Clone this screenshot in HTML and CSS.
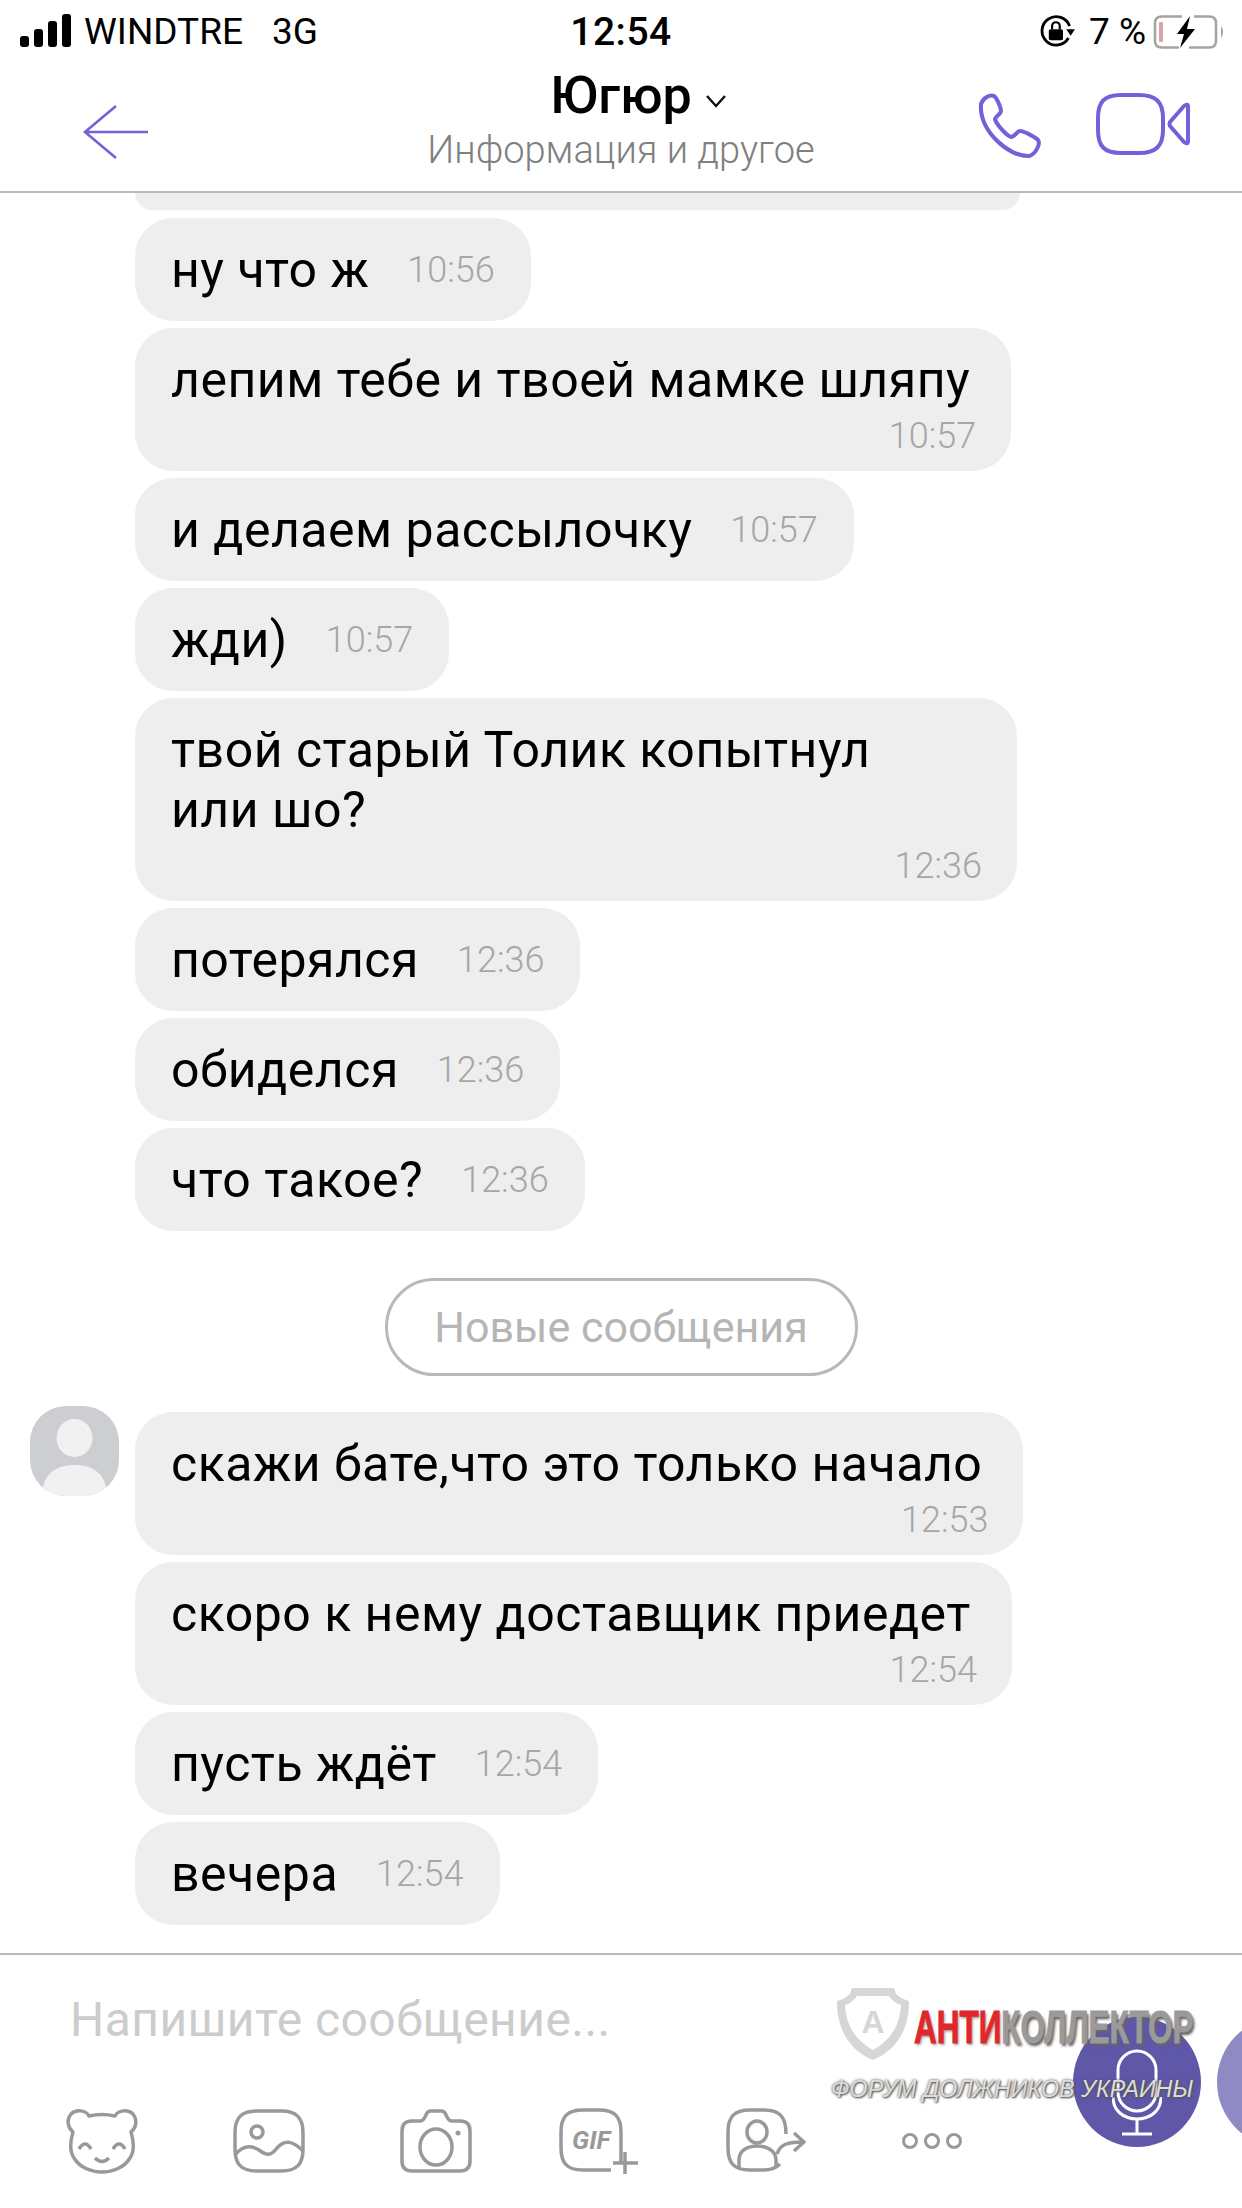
FILE: index.html
```html
<!DOCTYPE html>
<html lang="ru">
<head>
    <meta charset="UTF-8">
    <title>Югюр</title>
    <link rel="stylesheet" href="styles.css">
</head>
<body>
    <div class="screen">
        <div class="status-bar">
            <div class="status-left">
                <svg class="signal" width="51" height="33" viewBox="0 0 51 33">
                    <rect x="0" y="22" width="9" height="11" rx="3"/>
                    <rect x="14" y="15" width="9" height="18" rx="3"/>
                    <rect x="28" y="7" width="9" height="26" rx="3"/>
                    <rect x="42" y="0" width="9" height="33" rx="3"/>
                </svg>
                <span class="carrier">WINDTRE</span>
                <span class="network">3G</span>
            </div>
            <div class="status-time">12:54</div>
            <div class="status-right">
                <svg class="rotation-lock" width="36" height="33" viewBox="0 0 33 30">
                    <path d="M27 21 A13 13 0 1 1 28 10" fill="none" stroke="#000" stroke-width="2.6"/>
                    <path d="M25 13 L33 13 L29 19Z" fill="#000"/>
                    <rect x="9" y="13" width="13" height="10" rx="1.5" fill="#000"/>
                    <path d="M12 13 V10 A3.5 3.5 0 0 1 19 10 V13" fill="none" stroke="#000" stroke-width="2"/>
                </svg>
                <span class="battery-text">7 %</span>
                <svg class="battery" width="74" height="34" viewBox="0 0 74 34">
                    <path d="M29 1.5 H9 Q2 1.5 2 8 V26 Q2 32.500 9 32.500 H26" fill="none" stroke="#a3a3a3" stroke-width="2.500"/>
                    <path d="M41 1.500 H56 Q63 1.500 63 8 V26 Q63 32.500 56 32.500 H36" fill="none" stroke="#a3a3a3" stroke-width="2.500"/>
                    <rect x="6" y="7" width="4" height="20" rx="1" fill="#d9a3a8"/>
                    <path d="M37 1 L24 19 H31 L27 33 L42 14 H34Z" fill="#000"/>
                    <path d="M68 11 Q72 16 68 23Z" fill="#a3a3a3"/>
                </svg>
            </div>
        </div>

        <div class="chat-header">
            <svg class="back-icon" width="66" height="56" viewBox="0 0 66 56">
                <path d="M33 2 L2 28 L33 54 M2 28 H65" fill="none" stroke="#7360db" stroke-width="2.600"/>
            </svg>
            <div class="chat-title">
                <div class="chat-name">Югюр
                    <svg class="chevron" width="22" height="14" viewBox="0 0 22 14">
                        <path d="M2 2 L11 12 L20 2" fill="none" stroke="#111" stroke-width="2.400"/>
                    </svg>
                </div>
                <div class="chat-info">Информация и другое</div>
            </div>
            <div class="chat-actions">
                <svg width="66" height="66" viewBox="0 0 66 66">
                    <path d="M4 11 C6 5 13 1 17 3 C20 5 24 15 24 18 C24 21 19 23 18 26 C19 31 29 42 34 44 C38 44 40 38 43 38 C47 38 58 44 61 47 C64 51 58 62 52 63 C32 64 2 38 4 11Z" fill="none" stroke="#7360db" stroke-width="4" stroke-linejoin="round"/>
                </svg>
                <svg class="video-icon" width="95" height="62" viewBox="0 0 95 62">
                    <path d="M25 2 H43 C60 2 67 9 67 25 V37 C67 53 60 60 43 60 H25 C8 60 2 53 2 37 V25 C2 9 8 2 25 2Z" fill="none" stroke="#7360db" stroke-width="4"/>
                    <path d="M92 14 V48 Q92 52 88 49 L74 33 Q73 31 74 29 L88 13 Q92 10 92 14Z" fill="none" stroke="#7360db" stroke-width="4" stroke-linejoin="round"/>
                </svg>
            </div>
        </div>

        <div class="messages">
            <div class="cut-bubble"></div>

            <div class="bubble">
                <span class="text">ну что ж</span>
                <span class="time">10:56</span>
            </div>
            <div class="bubble stacked">
                <span class="text">лепим тебе и твоей мамке шляпу</span>
                <span class="time">10:57</span>
            </div>
            <div class="bubble">
                <span class="text">и делаем рассылочку</span>
                <span class="time">10:57</span>
            </div>
            <div class="bubble">
                <span class="text">жди)</span>
                <span class="time">10:57</span>
            </div>
            <div class="bubble stacked wide">
                <span class="text">твой старый Толик копытнул<br>или шо?</span>
                <span class="time">12:36</span>
            </div>
            <div class="bubble">
                <span class="text">потерялся</span>
                <span class="time">12:36</span>
            </div>
            <div class="bubble">
                <span class="text">обиделся</span>
                <span class="time">12:36</span>
            </div>
            <div class="bubble">
                <span class="text">что такое?</span>
                <span class="time">12:36</span>
            </div>

            <div class="new-divider">
                <span class="new-label">Новые сообщения</span>
            </div>

            <div class="group">
                <div class="avatar">
                    <svg width="89" height="90" viewBox="0 0 89 90">
                        <ellipse cx="44.500" cy="32" rx="18" ry="19" fill="#f1f1f2"/>
                        <path d="M12 90 C12 68 26 59 44.500 59 C63 59 77 68 77 90Z" fill="#f1f1f2"/>
                    </svg>
                </div>
                <div class="group-list">
                    <div class="bubble stacked">
                        <span class="text">скажи бате,что это только начало</span>
                        <span class="time">12:53</span>
                    </div>
                    <div class="bubble stacked">
                        <span class="text">скоро к нему доставщик приедет</span>
                        <span class="time">12:54</span>
                    </div>
                    <div class="bubble">
                        <span class="text">пусть ждёт</span>
                        <span class="time">12:54</span>
                    </div>
                    <div class="bubble">
                        <span class="text">вечера</span>
                        <span class="time">12:54</span>
                    </div>
                </div>
            </div>
        </div>

        <div class="composer">
            <div class="placeholder">Напишите сообщение...</div>
            <div class="tools">
                <svg width="72" height="66" viewBox="0 0 72 66">
                    <path d="M23 8 Q36 5 49 8 C52 2 62 1 67 6 C72 12 70 20 65 24 C68 34 68 44 64 50 C58 60 46 64 36 64 C26 64 14 60 8 50 C4 44 4 34 7 24 C2 20 0 12 5 6 C10 1 20 2 23 8Z M13 41 Q19 31 25 41 M47 41 Q53 31 59 41 M29 50 Q36 57 43 50"/>
                </svg>
                <svg width="72" height="64" viewBox="0 0 72 64">
                    <path d="M24 2 H48 C64 2 70 9 70 24 V40 C70 55 64 62 48 62 H24 C8 62 2 55 2 40 V24 C2 9 8 2 24 2Z"/>
                    <circle cx="24" cy="23" r="6"/>
                    <path d="M2 46 C10 36 18 36 26 41 C34 47 38 47 44 39 C52 30 60 32 70 42"/>
                </svg>
                <svg class="tool-tight" width="72" height="64" viewBox="0 0 72 64">
                    <path d="M12 12 H20 Q23 12 25 8 L27 4 Q28 2 31 2 H41 Q44 2 45 4 L47 8 Q49 12 52 12 H60 Q70 12 70 22 V52 Q70 62 60 62 H12 Q2 62 2 52 V22 Q2 12 12 12Z"/>
                    <ellipse cx="36" cy="38" rx="16" ry="18"/>
                    <circle cx="58" cy="24" r="2.500" class="dot-fill"/>
                </svg>
                <svg class="tool-tight" width="80" height="66" viewBox="0 0 80 66">
                    <path d="M62 54 V24 C62 9 56 2 40 2 H24 C8 2 2 9 2 24 V40 C2 55 8 62 24 62 H52"/>
                    <text class="gif-text" x="13" y="41">GIF</text>
                    <path d="M66 44 V66 M54 55 H79"/>
                </svg>
                <svg width="80" height="66" viewBox="0 0 80 66">
                    <path d="M60 26 C60 9 54 2 38 2 H24 C8 2 2 9 2 24 V40 C2 55 8 62 24 62 H38 C44 62 50 60 54 56"/>
                    <ellipse cx="31" cy="24" rx="10" ry="11"/>
                    <path d="M13 60 V52 C13 42 22 38 31 38 C40 38 50 42 50 52 V58"/>
                    <path d="M51 46 C54 36 62 34 78 34 M68 25 L78 34 L68 43"/>
                </svg>
                <svg class="more-icon" width="62" height="18" viewBox="0 0 62 18">
                    <circle cx="9" cy="9" r="6.500"/>
                    <circle cx="31" cy="9" r="6.500"/>
                    <circle cx="53" cy="9" r="6.500"/>
                </svg>
            </div>

            <div class="side-button"></div>
            <div class="mic-button">
                <svg width="50" height="88" viewBox="0 0 50 88">
                    <rect x="6" y="2" width="38" height="60" rx="19" fill="none" stroke="#fff" stroke-width="3"/>
                    <path d="M1 48 C1 62 12 70 25 70 C38 70 49 62 49 48 M25 70 V84 M10 85 H40" fill="none" stroke="#fff" stroke-width="3"/>
                </svg>
            </div>

            <div class="watermark">
                <svg class="shield" width="72" height="73" viewBox="0 0 72 73">
                    <path d="M15 1 H57 L59 7 Q64 12 72 14 C72 40 62 62 36 73 C10 62 0 40 0 14 Q8 12 13 7Z" fill="#d5d6d8"/>
                    <path d="M20 9 H52 Q57 16 64 18 C63 38 54 53 36 63 C18 53 9 38 8 18 Q15 16 20 9Z" fill="#fff"/>
                    <text class="shield-letter" x="36" y="46">A</text>
                </svg>
                <div class="wm-title"><span class="wm-red">АНТИ</span><span class="wm-gray">КОЛЛЕКТОР</span></div>
                <div class="wm-sub">ФОРУМ ДОЛЖНИКОВ УКРАИНЫ</div>
            </div>
        </div>
    </div>
</body>
</html>
```

FILE: styles.css
```css
* {
    margin: 0;
    padding: 0;
    box-sizing: border-box;
}

body {
    font-family: Roboto, 'Liberation Sans', sans-serif;
    background: white;
}

.screen {
    width: 1242px;
    height: 2208px;
    display: flex;
    flex-direction: column;
    overflow: hidden;
    position: relative;
}

/* barra de estado */
.status-bar {
    height: 60px;
    display: grid;
    grid-template-columns: minmax(0, 1fr) auto minmax(0, 1fr);
    align-items: center;
    padding: 3px 15px 0 20px;
    color: #000;
    font-size: 37px;
}

.status-left {
    display: flex;
    align-items: center;
}

.signal {
    fill: #000;
    margin-right: 13px;
    margin-top: -2px;
}

.network {
    margin-left: 29px;
}

.status-time {
    font-weight: 500;
    font-size: 39px;
    letter-spacing: 0.5px;
    margin-right: 5px;
}

.status-right {
    display: flex;
    align-items: center;
    justify-content: flex-end;
}

.battery-text {
    margin: 0 7px 0 14px;
}

/* cabecera */
.chat-header {
    height: 133px;
    flex-shrink: 0;
    border-bottom: 2px solid #b9b9b9;
    display: grid;
    grid-template-columns: minmax(0, 1fr) auto minmax(0, 1fr);
    padding: 0 51px 0 83px;
    align-items: start;
}

.back-icon {
    margin-top: 44px;
}

.chat-title {
    text-align: center;
    margin-left: -32px;
}

.chat-name {
    font-size: 52px;
    font-weight: 500;
    line-height: 60px;
    margin-top: 6px;
    color: #000;
    position: relative;
    display: inline-block;
}

.chevron {
    position: absolute;
    left: 100%;
    top: 28px;
    margin-left: 13px;
}

.chat-info {
    font-size: 38px;
    line-height: 44px;
    margin-top: 2px;
    color: #808080;
    font-weight: 300;
}

.chat-actions {
    display: flex;
    justify-content: flex-end;
    gap: 53px;
    margin-top: 33px;
}

/* mensajes */
.messages {
    flex: 1;
    padding-left: 135px;
    display: flex;
    flex-direction: column;
    align-items: flex-start;
    gap: 7px;
    overflow: hidden;
}

.cut-bubble {
    width: 885px;
    height: 17px;
    margin-bottom: 1px;
    background: #eeeeef;
    border-radius: 0 0 38px 38px;
    flex-shrink: 0;
}

.bubble {
    background: #eeeeef;
    border-radius: 38px;
    padding: 22px 36px 21px 36px;
    display: flex;
    align-items: center;
    gap: 38px;
    flex-shrink: 0;
}

.bubble.stacked {
    flex-direction: column;
    align-items: flex-end;
    gap: 6px;
    padding-bottom: 15px;
    padding-right: 35px;
}

.bubble.wide {
    width: 882px;
}

.bubble.stacked .text {
    align-self: flex-start;
    margin-right: 6px;
}

.text {
    font-size: 50px;
    letter-spacing: 0.5px;
    line-height: 60px;
    color: #000;
    white-space: nowrap;
}

.time {
    font-size: 36px;
    line-height: 40px;
    color: #a6a6a6;
    font-weight: 300;
}

.new-divider {
    margin: 40px 0 29px -135px;
    width: 1242px;
    display: flex;
    justify-content: center;
    flex-shrink: 0;
}

.new-label {
    width: 473px;
    height: 98px;
    border: 3px solid #b9b9b9;
    border-radius: 49px;
    font-size: 43px;
    line-height: 92px;
    text-align: center;
    color: #b5b5b5;
}

.group {
    display: flex;
    align-items: flex-start;
    margin-left: -105px;
}

.avatar {
    width: 89px;
    height: 90px;
    margin-right: 16px;
    margin-top: -6px;
    border-radius: 36px;
    background: #cdced1;
    overflow: hidden;
}

.avatar svg {
    display: block;
}

.group-list {
    display: flex;
    flex-direction: column;
    align-items: flex-start;
    gap: 7px;
}

/* caja de texto */
.composer {
    height: 255px;
    flex-shrink: 0;
    border-top: 2px solid #b9b9b9;
    position: relative;
}

.placeholder {
    font-size: 48px;
    letter-spacing: 0.45px;
    line-height: 56px;
    margin: 37px 0 0 70px;
    color: #cccccc;
}

.tools {
    display: flex;
    align-items: center;
    padding-left: 66px;
    margin-top: 60px;
}

.tools svg {
    fill: none;
    stroke: #999;
    stroke-width: 3.500;
    stroke-linejoin: round;
    margin-right: 95px;
    flex-shrink: 0;
}

.tools .tool-tight {
    margin-right: 87px;
}

.tools .dot-fill {
    fill: #999;
    stroke: none;
}

.gif-text {
    font-family: Roboto, sans-serif;
    font-size: 26px;
    font-weight: 700;
    font-style: italic;
    fill: #999;
    stroke: none;
}

.tools .more-icon {
    margin-right: 0;
    stroke-width: 3;
}

.mic-button {
    position: absolute;
    left: 1073px;
    top: 62px;
    width: 128px;
    height: 130px;
    border-radius: 50%;
    background: #5f57a8;
    display: flex;
    align-items: flex-start;
    justify-content: center;
    padding-top: 32px;
}

.side-button {
    position: absolute;
    left: 1217px;
    top: 62px;
    width: 128px;
    height: 130px;
    border-radius: 50%;
    background: #8f89c4;
}

/* marca de agua */
.watermark {
    position: absolute;
    left: 831px;
    top: 32px;
    width: 370px;
    height: 116px;
}

.shield {
    position: absolute;
    left: 6px;
    top: 0;
}

.shield-letter {
    font-family: 'Liberation Sans', sans-serif;
    font-size: 32px;
    font-weight: 700;
    text-anchor: middle;
    fill: #d5d6d8;
}

.wm-title {
    position: absolute;
    left: 83px;
    top: 13px;
    font-family: 'Liberation Sans', sans-serif;
    font-size: 47px;
    font-weight: 700;
    line-height: 54px;
    white-space: nowrap;
    transform: scaleX(0.67);
    transform-origin: left center;
    text-shadow: 3px 3px 3px #666;
}

.wm-red {
    color: #e0282c;
    -webkit-text-stroke: 1px #e0282c;
    text-shadow: 2px 2px 3px #999;
}

.wm-gray {
    color: #9a9a9a;
    -webkit-text-stroke: 1px #9a9a9a;
}

.wm-sub {
    position: absolute;
    left: 0;
    top: 87px;
    font-family: 'Liberation Sans', sans-serif;
    font-size: 23.3px;
    font-style: italic;
    line-height: 30px;
    white-space: nowrap;
    color: #dcdcdc;
    text-shadow: 0 0 3px #555, 1px 1px 2px #555;
}
```
